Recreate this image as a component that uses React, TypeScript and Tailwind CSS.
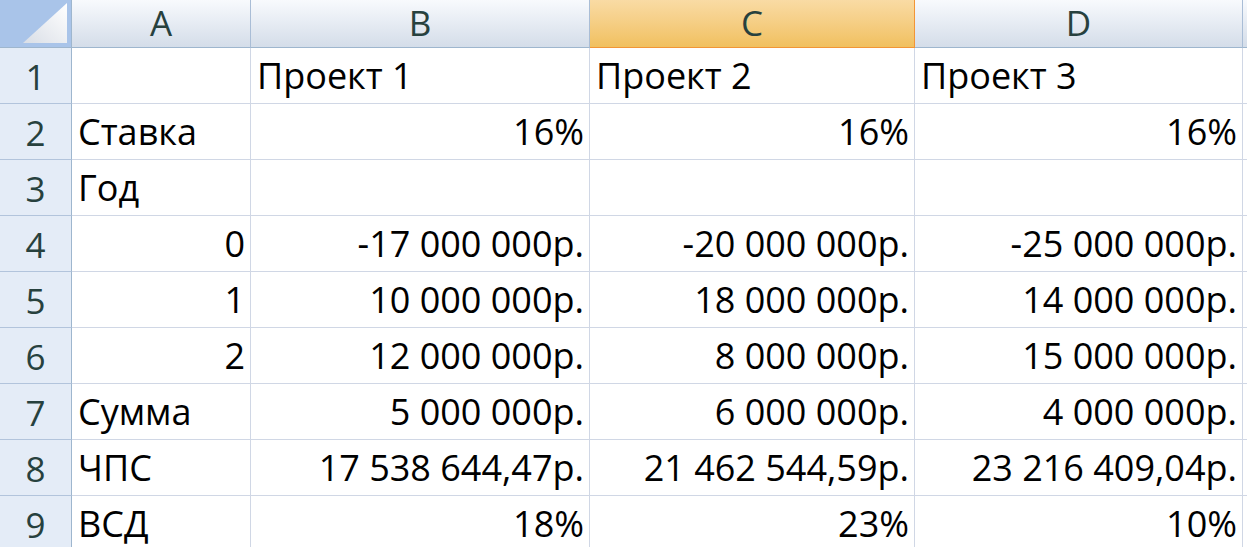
const cols = [
  { key: "A", w: "w-[179px]" },
  { key: "B", w: "w-[339px]" },
  { key: "C", w: "w-[325px]" },
  { key: "D", w: "w-[328px]" },
]

type Cell = { v: string; right?: boolean }

const rows: Cell[][] = [
  [{ v: "" }, { v: "Проект 1" }, { v: "Проект 2" }, { v: "Проект 3" }],
  [{ v: "Ставка" }, { v: "16%", right: true }, { v: "16%", right: true }, { v: "16%", right: true }],
  [{ v: "Год" }, { v: "" }, { v: "" }, { v: "" }],
  [{ v: "0", right: true }, { v: "-17 000 000р.", right: true }, { v: "-20 000 000р.", right: true }, { v: "-25 000 000р.", right: true }],
  [{ v: "1", right: true }, { v: "10 000 000р.", right: true }, { v: "18 000 000р.", right: true }, { v: "14 000 000р.", right: true }],
  [{ v: "2", right: true }, { v: "12 000 000р.", right: true }, { v: "8 000 000р.", right: true }, { v: "15 000 000р.", right: true }],
  [{ v: "Сумма" }, { v: "5 000 000р.", right: true }, { v: "6 000 000р.", right: true }, { v: "4 000 000р.", right: true }],
  [{ v: "ЧПС" }, { v: "17 538 644,47р.", right: true }, { v: "21 462 544,59р.", right: true }, { v: "23 216 409,04р.", right: true }],
  [{ v: "ВСД" }, { v: "18%", right: true }, { v: "23%", right: true }, { v: "10%", right: true }],
]

function Corner() {
  return (
    <div className="w-[72px] h-full shrink-0 bg-[#a9c4e9] border-r border-b border-[#9eb6ce]">
      <svg width="71" height="47" viewBox="0 0 71 47">
        <defs>
          <linearGradient id="tri" x1="1" y1="0" x2="0" y2="1">
            <stop offset="0" stopColor="#ffffff" />
            <stop offset="1" stopColor="#d9dee6" />
          </linearGradient>
        </defs>
        <polygon points="23,43 67,43 67,3" fill="url(#tri)" />
      </svg>
    </div>
  )
}

export default function App() {
  return (
    <div
      className="w-[1247px] h-[547px] overflow-hidden bg-white text-black"
      style={{ fontFamily: '"Open Sans", "Noto Sans", sans-serif' }}
    >
      {/* column headers */}
      <div className="flex h-[48px]">
        <Corner />
        {cols.map((c) =>
          c.key === "C" ? (
            <div
              key={c.key}
              className={`${c.w} shrink-0 flex items-end justify-center pb-[7px] bg-gradient-to-b from-[#f9dba4] to-[#f1c05e] border-r border-b border-[#f29536] text-[35px] leading-none text-[#27413e]`}
            >
              {c.key}
            </div>
          ) : (
            <div
              key={c.key}
              className={`${c.w} shrink-0 flex items-end justify-center pb-[7px] bg-gradient-to-b from-[#f8fafd] to-[#d4dde9] border-r border-b border-r-[#a9bdd6] border-b-[#9eb6ce] text-[35px] leading-none text-[#27413e]`}
            >
              {c.key}
            </div>
          )
        )}
        <div className="flex-1 bg-gradient-to-b from-[#f8fafd] to-[#d4dde9] border-b border-[#9eb6ce]" />
      </div>

      {rows.map((r, i) => (
        <div key={i} className="flex h-[56px]">
          <div className="w-[72px] shrink-0 flex items-end justify-center pb-[9px] bg-[#e4ecf7] border-r border-b border-r-[#9eb6ce] border-b-[#b2c4dc] text-[35px] leading-none text-[#27413e]">
            {i + 1}
          </div>
          {r.map((cell, j) => (
            <div
              key={j}
              className={`${cols[j].w} shrink-0 flex items-end pb-[9px] border-r border-b border-[#d0d7e5] text-[36px] leading-none whitespace-nowrap ${
                cell.right ? "justify-end pr-[5px]" : "pl-[6px]"
              }`}
            >
              {cell.v}
            </div>
          ))}
          <div className="flex-1 border-b border-[#d0d7e5]" />
        </div>
      ))}
    </div>
  )
}
